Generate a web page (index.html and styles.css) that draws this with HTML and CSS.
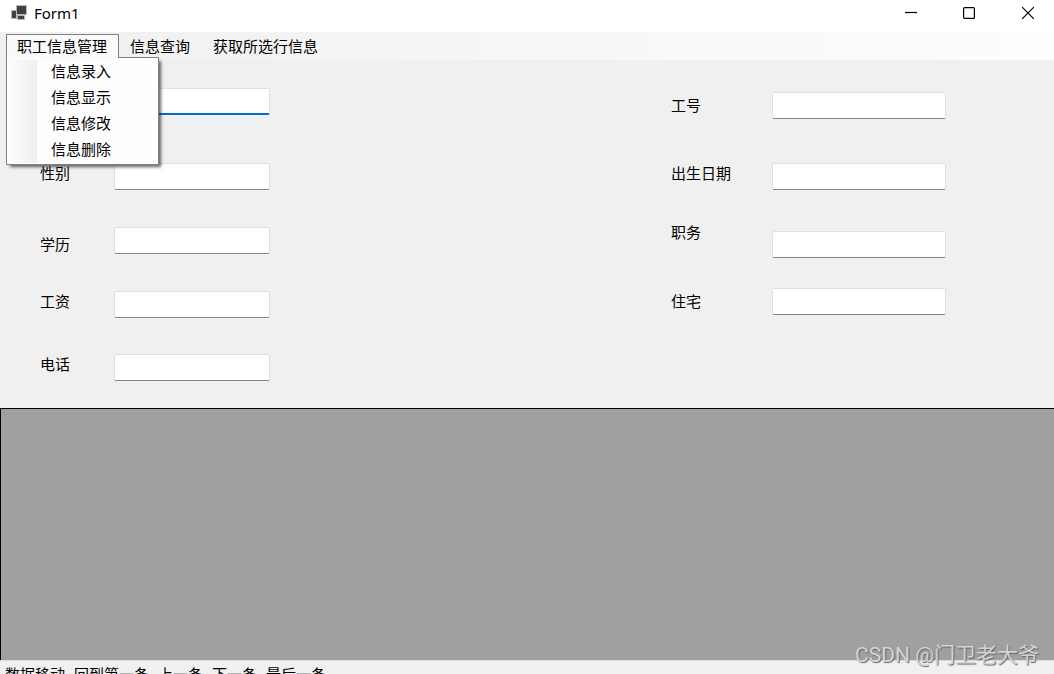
FILE: index.html
```html
<!DOCTYPE html>
<html lang="zh-CN">
<head>
<meta charset="utf-8">
<title>Form1</title>
<link rel="stylesheet" href="styles.css">
</head>
<body>
<div class="window">
  <header class="titlebar">
    <svg class="app-icon" width="16" height="16" viewBox="0 0 16 16" aria-hidden="true">
      <path fill="#b9b9b9" d="M5 0h11v10h-2v5H6v-1H0V5h5z"/>
      <path fill="#404040" d="M6 1h9v8H6zM1 6h4v7H1zM7 11h6v3H7z"/>
    </svg>
    <span class="title">Form1</span>
    <div class="controls">
      <button type="button" aria-label="最小化"><svg width="12" height="12" viewBox="0 0 12 12"><path d="M0 5.5h12"/></svg></button>
      <button type="button" aria-label="最大化"><svg width="12" height="12" viewBox="0 0 12 12"><rect x=".6" y=".6" width="10.8" height="10.8" rx="1"/></svg></button>
      <button type="button" aria-label="关闭"><svg width="12" height="12" viewBox="0 0 12 12"><path d="M0 0l12 12M12 0L0 12"/></svg></button>
    </div>
  </header>

  <nav class="menubar">
    <div class="menu">
      <button type="button" class="menu-item open" aria-expanded="true">职工信息管理</button>
      <div class="dropdown">
        <button type="button">信息录入</button>
        <button type="button">信息显示</button>
        <button type="button">信息修改</button>
        <button type="button">信息删除</button>
      </div>
    </div>
    <button type="button" class="menu-item">信息查询</button>
    <button type="button" class="menu-item">获取所选行信息</button>
  </nav>

  <form class="form">
    <div class="column column-left">
      <div class="field"><input class="active" type="text" aria-label="姓名"></div>
      <div class="field gap-xl"><label for="sex">性别</label><input id="sex" type="text"></div>
      <div class="field gap-l label-low"><label for="edu">学历</label><input id="edu" type="text"></div>
      <div class="field gap-l"><label for="pay">工资</label><input id="pay" type="text"></div>
      <div class="field gap-m"><label for="tel">电话</label><input id="tel" type="text"></div>
    </div>
    <div class="column column-right">
      <div class="field label-mid"><label for="no">工号</label><input id="no" type="text"></div>
      <div class="field gap-xl"><label for="born">出生日期</label><input id="born" type="text"></div>
      <div class="field gap-m stepped"><label for="post">职务</label><input id="post" type="text"></div>
      <div class="field gap-s label-mid"><label for="home">住宅</label><input id="home" type="text"></div>
    </div>
  </form>

  <main class="datagrid"></main>

  <footer class="statusbar">
    <span>数据移动</span>
    <button type="button">回到第一条</button>
    <button type="button">上一条</button>
    <button type="button">下一条</button>
    <button type="button">最后一条</button>
  </footer>
</div>
<div class="watermark">CSDN @门卫老大爷</div>
</body>
</html>
```
FILE: styles.css
```css
* { box-sizing: border-box; }

body {
  margin: 0;
  height: 100vh;
  overflow: hidden;
  background: #f0f0f0;
  color: #000;
  font: 15px/20px "Noto Sans", "Noto Sans CJK SC", sans-serif;
}

button {
  margin: 0;
  padding: 0;
  border: 0;
  background: none;
  color: inherit;
  font: inherit;
  white-space: nowrap;
}

/* the status bar runs past the bottom edge */
.window {
  display: flex;
  flex-direction: column;
  height: calc(100vh + 12px);
}

.titlebar {
  display: flex;
  align-items: center;
  height: 32px;
  padding: 0 0 6px 11px;
  background: #fff;
}
.app-icon { display: block; margin-bottom: 1px; }
.title { margin-left: 7px; }
.controls { display: flex; margin-left: auto; }
.controls button {
  display: flex;
  align-items: center;
  justify-content: center;
  width: 58px;
  height: 26px;
}
.controls button:last-child { width: 52px; margin-left: 4px; }
.controls svg { fill: none; stroke: #000; stroke-width: 1.2; }

.menubar {
  display: flex;
  height: 28px;
  padding: 2px 6px;
  background: linear-gradient(90deg, #f0f0f0, #fdfdfd);
}
.menu { position: relative; }
.menu-item {
  height: 24px;
  padding: 0 11px 2px 10px;
  border: 1px solid transparent;
  border-bottom: 0;
}
.menu .menu-item {
  position: relative;
  z-index: 2;
  border-color: #808080;
  background: #fafafa;
}
.dropdown {
  position: absolute;
  z-index: 1;
  top: 23px;
  left: 0;
  display: flex;
  flex-direction: column;
  width: 153px;
  padding: 0 0 2px 1px;
  border: 1px solid #808080;
  background: linear-gradient(90deg, #fcfcfc, #f0f0f0) 1px 2px / 29px calc(100% - 3px) no-repeat #fdfdfd;
  box-shadow: 3px 3px 3px -1px rgba(0, 0, 0, .6);
}
.dropdown button {
  height: 26px;
  padding-left: 43px;
  text-align: left;
}

.form {
  display: grid;
  grid-template-columns: 631fr 383fr;
  padding: 28px 0 27px 40px;
}
.column-left { --label: 74px; --box: 156px; }
.column-right { --label: 101px; --box: 174px; padding-top: 4px; }
.field {
  display: grid;
  grid-template-columns: var(--label) var(--box);
  align-items: start;
}
.field input {
  grid-column: 2;
  width: 100%;
  height: 27px;
  padding: 2px 6px;
  border: 1px solid #e0e0e0;
  border-bottom-color: #868686;
  border-radius: 2px;
  outline: 0;
  background: #fff;
  font: inherit;
}
.field input.active { border-bottom: 2px solid #0070cc; }
.label-low { align-items: end; }
.label-mid { align-items: center; }
.label-mid label { padding-bottom: 2px; }
.stepped input { margin-top: 9px; }
.gap-s { margin-top: 30px; }
.gap-m { margin-top: 36px; }
.gap-l { margin-top: 37px; }
.gap-xl { margin-top: 48px; }
.column-right .gap-xl { margin-top: 44px; }
.column-right .gap-m { margin-top: 32px; }

.datagrid {
  flex: 1;
  border-top: 1px solid #000;
  border-left: 1px solid #000;
  background: #a0a0a0;
}

.statusbar {
  display: flex;
  align-items: flex-start;
  gap: 9px;
  height: 26px;
  padding: 3px 5px 0;
  border-top: 1px solid #dadada;
  background: #f0f0f0;
}

.watermark {
  position: absolute;
  right: 15px;
  bottom: 5px;
  color: #d4d4d4;
  font: 21px/28px Roboto, "Noto Sans CJK SC", sans-serif;
  text-shadow: 1px 1px 1px #666;
}
```
